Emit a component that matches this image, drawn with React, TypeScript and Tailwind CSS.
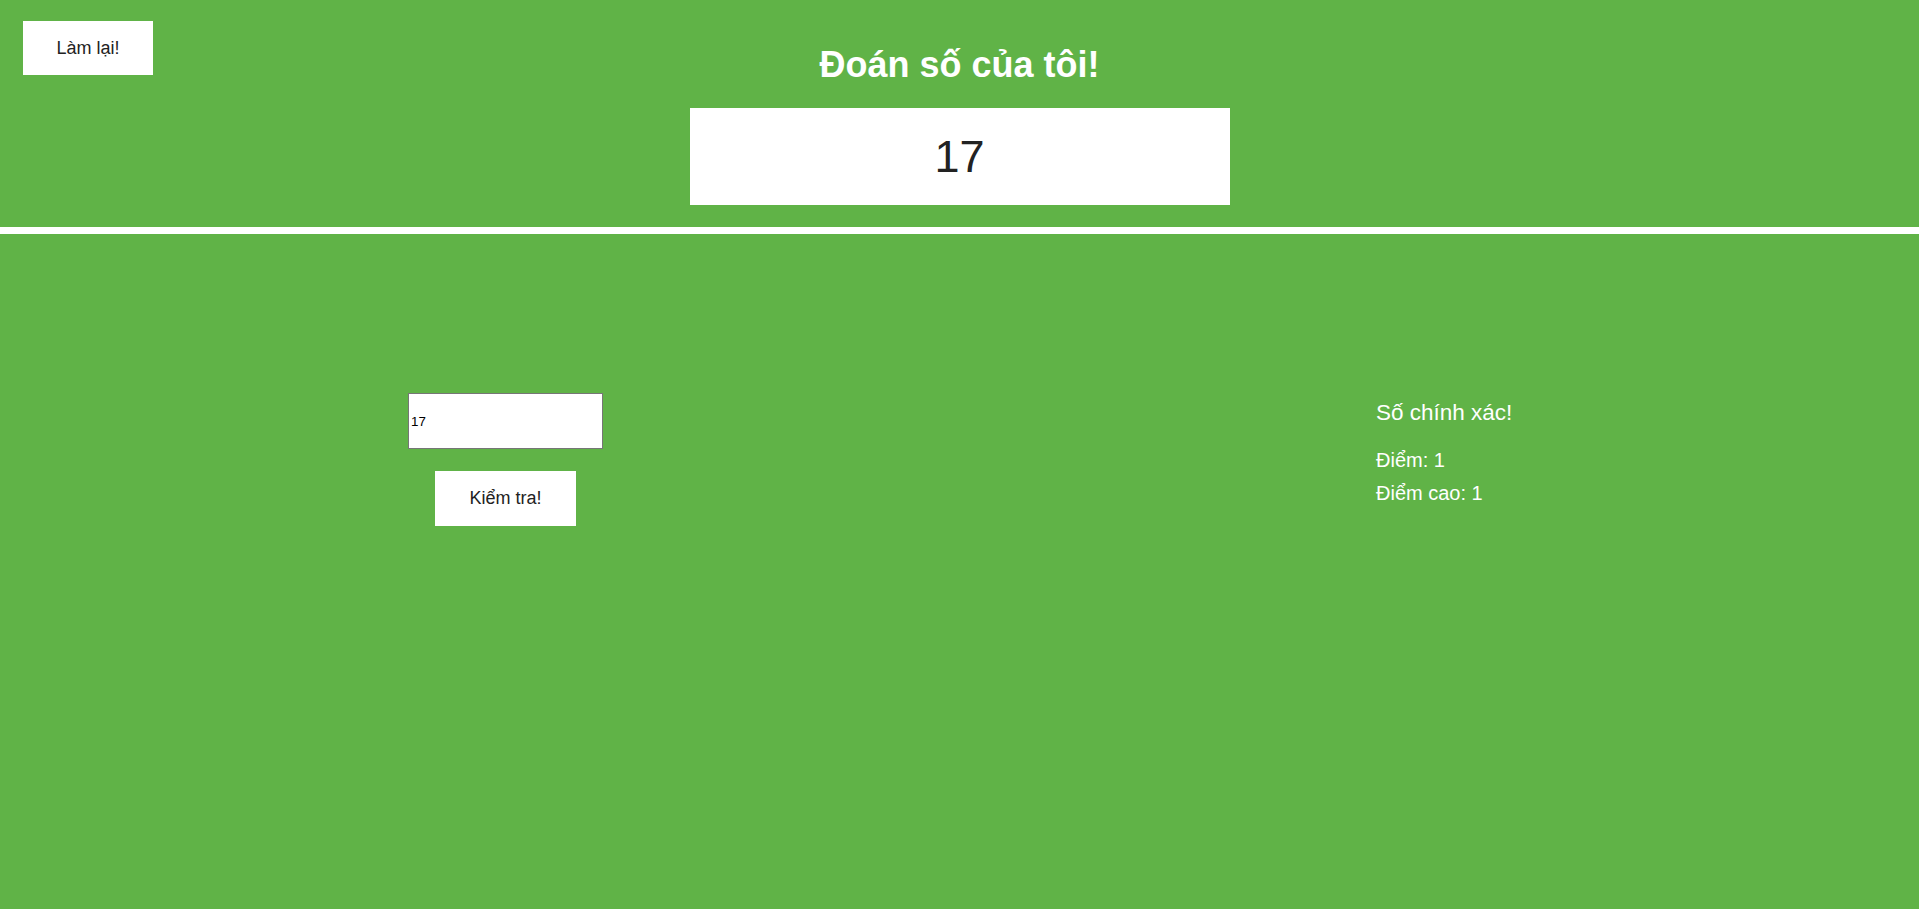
import { useState } from 'react'

const font = { fontFamily: '"Liberation Sans", Arial, sans-serif' }

export default function App() {
  const [guess, setGuess] = useState('17')
  const [score] = useState(1)
  const [highscore] = useState(1)

  return (
    <div className="min-h-[909px] bg-[#60b347]" style={font}>
      {/* header */}
      <header className="grid h-[234px] grid-cols-[1fr_540px_1fr] border-b-[7px] border-white px-[23px] pt-[21px]">
        <div>
          <button className="flex h-[54px] w-[130px] items-center justify-center bg-white text-[18px] text-[#222]">
            Làm lại!
          </button>
        </div>
        <div className="flex flex-col items-center">
          <h1 className="mt-[26px] text-[36px] font-bold leading-[36px] text-white">
            Đoán số của tôi!
          </h1>
          <div className="mt-[25px] flex h-[97px] w-[540px] items-center justify-center bg-white text-[45px] text-[#222]">
            17
          </div>
        </div>
        <div />
      </header>

      {/* main */}
      <main className="flex items-start">
        <section className="flex w-[1011px] flex-col items-center pt-[159px]">
          <input
            type="number"
            value={guess}
            onChange={(e) => setGuess(e.target.value)}
            className="h-[56px] w-[195px] border border-[#767676] bg-white pl-[2px] text-[13.33px] text-black outline-none [appearance:textfield]"
            style={font}
          />
          <button className="mt-[22px] flex h-[55px] w-[141px] items-center justify-center bg-white text-[18px] text-[#222]">
            Kiểm tra!
          </button>
        </section>

        <section className="ml-[365px] pt-[166px] text-white">
          <p className="text-[22.5px] leading-[26px]">Số chính xác!</p>
          <p className="mt-[18px] text-[20px] leading-[33px]">Điểm: {score}</p>
          <p className="text-[20px] leading-[33px]">Điểm cao: {highscore}</p>
        </section>
      </main>
    </div>
  )
}
